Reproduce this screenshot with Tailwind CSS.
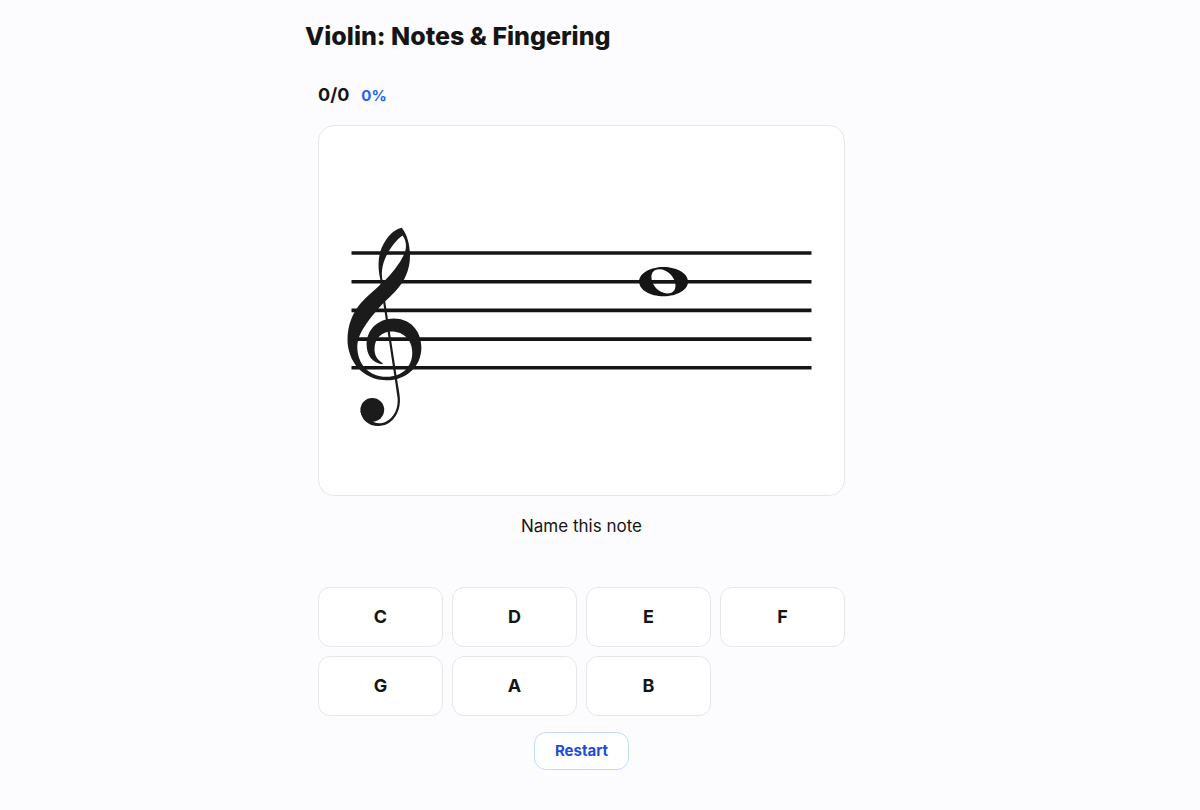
<!DOCTYPE html>
<html lang="en">

<head>
  <meta charset="UTF-8">
  <meta name="viewport" content="width=device-width, initial-scale=1">
  <title>Violin: Notes &amp; Fingering</title>
  <script src="https://cdn.jsdelivr.net/npm/@tailwindcss/browser@4"></script>
</head>

<body class="min-h-screen bg-[#fcfcfe] pr-[37px] font-['Inter',sans-serif] text-[#151515]">
  <main class="mx-auto max-w-[553px] pt-4 pb-10">
    <h1 class="text-[25px] leading-10 font-extrabold">Violin: Notes &amp; Fingering</h1>

    <div class="px-[13px] pt-[25px]">
      <!-- Score -->
      <div class="flex items-baseline gap-3 font-bold">
        <span class="text-lg leading-7">0/0</span>
        <span class="text-[15px] leading-7 text-[#2563eb]">0%</span>
      </div>

      <!-- Staff card -->
      <section class="mt-[15px] overflow-hidden rounded-2xl border border-gray-200 bg-white">
        <svg class="block h-auto w-full" viewBox="319 126 525 369" role="img" aria-label="Treble staff with one whole note">
          <!-- Staff lines -->
          <path d="M351.5 253H811.5M351.5 281.7H811.5M351.5 310.4H811.5M351.5 339.1H811.5M351.5 367.8H811.5" fill="none" stroke="#151515" stroke-width="3.6" />
          <!-- Treble clef -->
          <g fill="#1b1b1b">
            <path fill-rule="evenodd" d="M401.7 227.7C393 229 384 240 380.3 251.5C377.8 260 378.2 270 380 278L381 284C374.5 290.5 366.5 296.5 360.7 303.3C353 312 347.5 325 347.5 339.5C347.5 362 363.5 380.3 386.7 380.3C406.5 380.3 421.4 366.5 421.4 347.5C421.4 330.5 410 318.4 394 318.4C377.5 318.4 366.6 330 366.6 344.5C366.6 355.5 373 363.5 382.3 364.2L382.8 363.2C376.8 359.5 374.5 355 374.5 349C374.5 338.5 382 331.5 391.5 331.5C404 331.5 412.3 340.5 412.3 352.5C412.3 366.5 402.5 376.8 386.7 376.8C368.5 376.8 357.3 363.5 357.3 346.7C357.3 338.5 361 331 369 320C372.5 315.5 378 308.5 383.7 302.7C387.5 299 391.5 295.5 395.2 291.5C405 281 410 269.5 410 255.5C410 244.5 406.8 233.8 401.7 227.7ZM402.5 235.5C405.5 239.5 406.6 244 405.6 249.5C404 257 397 267 390 275L383 282.5C381.5 277 381.5 271.5 382.7 266C385.3 254.5 394 241.5 402.5 235.5Z" />
            <circle cx="372.3" cy="409.8" r="11.9" />
            <path d="M360.5 411C361.5 420 368.5 426.1 378.5 426C392 425.8 400.7 413 399.9 398.5C399.7 393.5 398.2 387 397.3 380.5L382.4 283L380.3 283.4L395.1 381L397.6 398.5C398.5 412 390.5 422.2 380.5 423.2C377 423.5 373.3 422.5 372 420.5L378 414Z" />
          </g>
          <!-- Whole note -->
          <path fill="#151515" fill-rule="evenodd" d="M663.5 267.1C677 267.1 688 273.5 688 281.7C688 289.9 677 296.2 663.5 296.2C650 296.2 639.2 289.9 639.2 281.7C639.2 273.5 650 267.1 663.5 267.1ZM659.5 269.2C654 269.2 651.4 272.5 651.4 277C651.4 285.5 659.5 293.4 667.3 293.4C672.8 293.4 675.5 290.2 675.5 285.7C675.5 277.2 667.3 269.2 659.5 269.2Z" />
          <path d="M651 281.7H676" stroke="#151515" stroke-width="3.4" />
        </svg>
      </section>

      <p class="mt-4 text-center text-[17px] leading-7">Name this note</p>

      <!-- Answers -->
      <div class="mt-[47px] grid grid-cols-4 gap-[9px] text-lg font-bold">
        <button type="button" class="h-[60px] rounded-xl border border-gray-200 bg-white">C</button>
        <button type="button" class="h-[60px] rounded-xl border border-gray-200 bg-white">D</button>
        <button type="button" class="h-[60px] rounded-xl border border-gray-200 bg-white">E</button>
        <button type="button" class="h-[60px] rounded-xl border border-gray-200 bg-white">F</button>
        <button type="button" class="h-[60px] rounded-xl border border-gray-200 bg-white">G</button>
        <button type="button" class="h-[60px] rounded-xl border border-gray-200 bg-white">A</button>
        <button type="button" class="h-[60px] rounded-xl border border-gray-200 bg-white">B</button>
      </div>

      <div class="mt-4 flex justify-center">
        <button type="button" class="h-[38px] rounded-xl border border-blue-200 bg-white px-5 text-[15px] font-bold text-[#1d4ed8]">Restart</button>
      </div>
    </div>
  </main>
</body>

</html>
